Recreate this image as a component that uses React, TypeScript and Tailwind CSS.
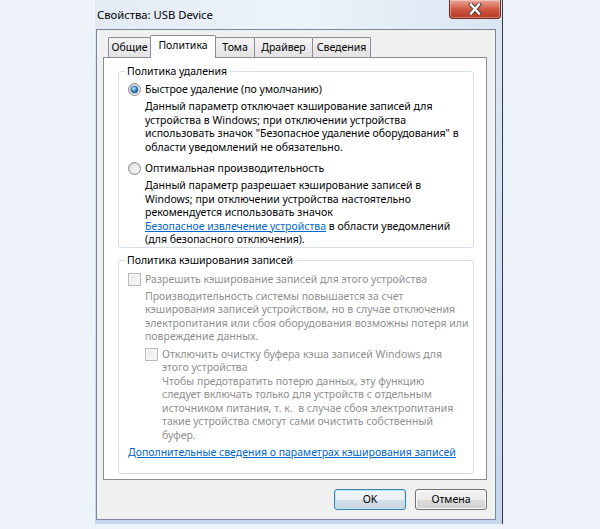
import type { ReactNode } from "react";

const GRAY = "text-[#8f8f8f]";

function RadioMark({ id, checked }: { id: string; checked?: boolean }) {
  return (
    <svg width="13" height="13" viewBox="0 0 13 13" className="shrink-0">
      <defs>
        <linearGradient id={`${id}-ring`} x1="0" y1="0" x2="1" y2="1">
          <stop offset="0" stopColor="#c9c9c9" />
          <stop offset="1" stopColor="#fbfbfb" />
        </linearGradient>
        <radialGradient id={`${id}-dot`} cx="0.4" cy="0.35" r="0.75">
          <stop offset="0" stopColor="#c4f0ff" />
          <stop offset="0.45" stopColor="#3f94d4" />
          <stop offset="1" stopColor="#123f7a" />
        </radialGradient>
      </defs>
      <circle cx="6.5" cy="6.5" r="6" fill={`url(#${id}-ring)`} stroke="#8a8a8a" strokeWidth="1" />
      <circle cx="6.5" cy="6.5" r="4.2" fill="#f4f4f4" opacity="0.6" />
      {checked && <circle cx="6.5" cy="6.5" r="3.6" fill={`url(#${id}-dot)`} stroke="#1c4f86" strokeWidth="0.5" />}
    </svg>
  );
}

function CheckMark() {
  return (
    <span className="block w-[13px] h-[13px] shrink-0 border border-[#b9b9b9] bg-[#f4f4f4] p-[2px]">
      <span className="block w-full h-full bg-gradient-to-br from-[#e6e6e6] to-[#fafafa]" />
    </span>
  );
}

function Lines({ lines, className = "" }: { lines: ReactNode[]; className?: string }) {
  return (
    <div className={className}>
      {lines.map((l, i) => (
        <div key={i} className="whitespace-pre">{l}</div>
      ))}
    </div>
  );
}

function Group({ title, children, className = "" }: { title: string; children: ReactNode; className?: string }) {
  return (
    <fieldset className={`min-w-0 border border-[#d5dfe5] rounded-[3px] ${className}`}>
      <legend className="ml-[6px] px-[2px] leading-[13.5px] text-black">{title}</legend>
      {children}
    </fieldset>
  );
}

function Tab({ label, active, w, first }: { label: string; active?: boolean; w: string; first?: boolean }) {
  if (active) {
    return (
      <div className={`relative z-10 ${w} h-[23px] -mb-px -ml-px bg-white border border-b-0 border-[#898c95] rounded-t-[2px] flex justify-center pt-[3px]`}>
        {label}
      </div>
    );
  }
  return (
    <div className={`${w} h-[20px] ${first ? "" : "-ml-px"} border border-b-0 border-[#898c95] rounded-t-[2px] bg-gradient-to-b from-[#f4f4f4] to-[#e3e3e3] flex justify-center pt-[3px]`}>
      {label}
    </div>
  );
}

function CloseButton() {
  return (
    <div className="mr-px w-[52px] h-[19px] rounded-b-[4px] border border-t-0 border-[#6b2a22] bg-gradient-to-b from-[#e9a899] via-[#cf5a45] to-[#b8371f] shadow-[inset_0_0_0_1px_rgba(255,255,255,0.35)] flex items-center justify-center">
      <svg width="14" height="12" viewBox="0 0 14 12">
        <path d="M3 1.5 L11 10.5 M11 1.5 L3 10.5" stroke="#4a3a38" strokeWidth="4.2" strokeLinecap="square" />
        <path d="M3 1.5 L11 10.5 M11 1.5 L3 10.5" stroke="#ffffff" strokeWidth="2.4" strokeLinecap="square" />
      </svg>
    </div>
  );
}

function Button({ label, primary }: { label: string; primary?: boolean }) {
  return (
    <div
      className={`w-[72px] h-[21px] rounded-[3px] border flex items-center justify-center ${
        primary
          ? "border-[#3c7fb1] shadow-[inset_0_0_0_1px_#b6e4f8] bg-[linear-gradient(#f2f6f9_0%,#e9eff3_50%,#d4e0e8_50%,#c9d7e1_100%)]"
          : "border-[#707070] shadow-[inset_0_0_0_1px_#fbfbfb] bg-[linear-gradient(#f2f2f2_0%,#ebebeb_50%,#dddddd_50%,#cfcfcf_100%)]"
      }`}
    >
      {label}
    </div>
  );
}

export default function App() {
  return (
    <div className="w-[600px] h-[529px] overflow-hidden bg-[#eef3fa] font-['Noto_Sans',sans-serif] text-[10.5px] leading-[13.5px] text-black">
      <div className="ml-[95px] w-[408px] h-[524px] flex flex-col border-r border-[#343b46] bg-gradient-to-b from-[#dde8f5] to-[#c4d7ee]">
        {/* caption */}
        <div className="h-[29px] flex items-start justify-between bg-gradient-to-r from-[#e3ebf5] via-[#edf3fa] to-[#dae5f2]">
          <span className="pl-[2px] pt-[7px] text-[11.25px] leading-[16px]">Свойства: USB Device</span>
          <CloseButton />
        </div>

        {/* client area */}
        <div className="ml-px mr-[6px] mb-[4px] flex-1 border border-[#7b8798] bg-[#f0f0f0] flex flex-col">
          <div className="mt-[5px] ml-[6px] h-[22px] pl-[5px] flex items-end">
            <Tab label="Общие" w="w-[43px]" first />
            <Tab label="Политика" w="w-[66px]" active />
            <Tab label="Тома" w="w-[40px]" />
            <Tab label="Драйвер" w="w-[59px]" />
            <Tab label="Сведения" w="w-[59px]" />
          </div>

          <div className="ml-[6px] w-[384px] h-[423px] border border-[#898c95] bg-white pl-[14px] pr-[12px] pt-[7px]">
            <Group title="Политика удаления">
              <div className="pl-[9px] pt-[4.5px]">
                <div className="flex items-center gap-[4px] h-[13.5px]">
                  <RadioMark id="fast" checked />
                  <span>Быстрое удаление (по умолчанию)</span>
                </div>
                <Lines
                  className="ml-[17px] mt-[3.5px]"
                  lines={[
                    "Данный параметр отключает кэширование записей для",
                    "устройства в Windows; при отключении устройства",
                    "использовать значок \"Безопасное удаление оборудования\" в",
                    "области уведомлений не обязательно.",
                  ]}
                />
                <div className="mt-[8px] flex items-center gap-[4px] h-[13.5px]">
                  <RadioMark id="perf" />
                  <span>Оптимальная производительность</span>
                </div>
                <Lines
                  className="ml-[17px] mt-[3.5px]"
                  lines={[
                    "Данный параметр разрешает кэширование записей в",
                    "Windows; при отключении устройства настоятельно",
                    "рекомендуется использовать значок",
                    <>
                      <span className="text-[#0066cc] underline">Безопасное извлечение устройства</span> в области уведомлений
                    </>,
                    "(для безопасного отключения).",
                  ]}
                />
              </div>
            </Group>

            <Group title="Политика кэширования записей" className={`mt-[6px] ${GRAY}`}>
              <div className="pl-[9px] pt-[5.5px] pb-[14px]">
                <div className="flex items-center gap-[4px] h-[13.5px]">
                  <CheckMark />
                  <span>Разрешить кэширование записей для этого устройства</span>
                </div>
                <Lines
                  className="ml-[17px] mt-[3.5px]"
                  lines={[
                    "Производительность системы повышается за счет",
                    "кэширования записей устройством, но в случае отключения",
                    "электропитания или сбоя оборудования возможны потеря или",
                    "повреждение данных.",
                  ]}
                />
                <div className="ml-[17px] mt-[4px] flex items-start gap-[4px]">
                  <CheckMark />
                  <Lines
                    lines={[
                      "Отключить очистку буфера кэша записей Windows для",
                      "этого устройства",
                      "Чтобы предотвратить потерю данных, эту функцию",
                      "следует включать только для устройств с отдельным",
                      "источником питания, т. к.  в случае сбоя электропитания",
                      "такие устройства смогут сами очистить собственный",
                      "буфер.",
                    ]}
                  />
                </div>
                <div className="mt-[3.5px] text-[#0066cc] underline whitespace-nowrap">
                  Дополнительные сведения о параметрах кэширования записей
                </div>
              </div>
            </Group>
          </div>

          <div className="mt-[9px] pr-[8px] flex justify-end gap-[9px]">
            <Button label="OK" primary />
            <Button label="Отмена" />
          </div>
        </div>
      </div>
    </div>
  );
}
